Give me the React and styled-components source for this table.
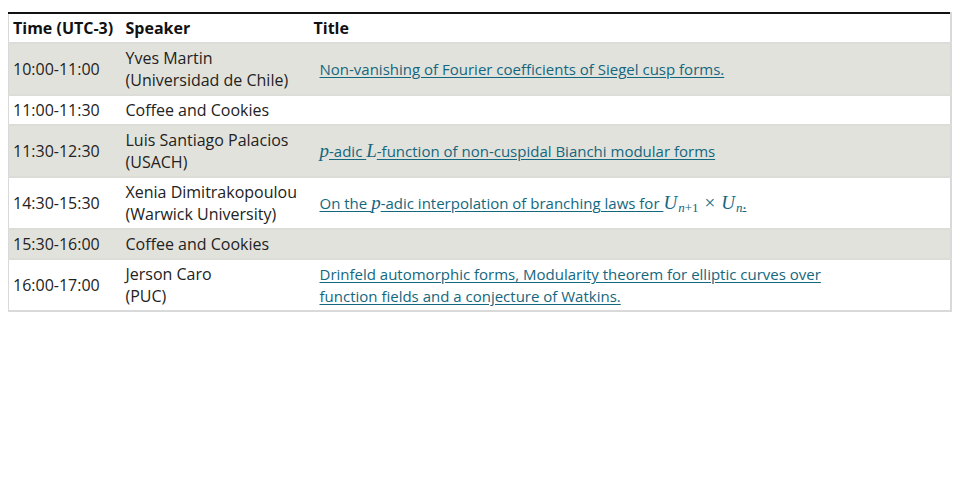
import React from 'react';
import styled, { createGlobalStyle } from 'styled-components';

const GlobalStyles = createGlobalStyle`
    body {
        margin: 8px;
        font-family: "Open Sans", "Liberation Sans", sans-serif;
        font-size: 16px;
        color: #222;
        background: #fff;
    }
`;

const Table = styled.table`
    width: 100%;
    margin-top: 4px;
    border-collapse: collapse;
    table-layout: fixed;
    border-top: 2px solid #111;
    border-left: 1px solid #d9d9d9;
    border-right: 2px solid #d9d9d9;
    border-bottom: 2px solid #d9d9d9;
`

const Th = styled.th`
    text-align: left;
    font-weight: 700;
    color: #111;
    line-height: 22px;
    padding: 3px 4px;
`

const Row = styled.tr`
    background-color: ${p => p.$shaded ? '#e2e2dc' : '#fff'};
    border-top: 2px solid #dcdcd8;
`

const Td = styled.td`
    vertical-align: middle;
    line-height: 22px;
    padding: 3px 4px;
`

const TitleLink = styled.a`
    display: block;
    max-width: 510px;
    margin-left: 6px;
    font-size: 15px;
    line-height: 22px;
    color: #13677e;
    text-decoration: underline;
    text-underline-offset: 2px;
`

const MathText = styled.span`
    display: inline-block;
    font-family: "Liberation Serif", "DejaVu Serif", serif;
    font-style: italic;
    font-size: 19px;
    line-height: 1;
    text-decoration: none;
`

const Sub = styled.sub`
    font-size: 13px;
    vertical-align: -3px;
    line-height: 1;
    padding-left: 1px;
`

const Upright = styled.span`
    font-style: normal;
    padding: ${p => p.$spaced ? '0 6px' : '0'};
`

const talks = [
    { time: '10:00-11:00', speaker: 'Yves Martin', place: 'Universidad de Chile', title: <>Non-vanishing of Fourier coefficients of Siegel cusp forms.</> },
    { time: '11:00-11:30', speaker: 'Coffee and Cookies' },
    { time: '11:30-12:30', speaker: 'Luis Santiago Palacios', place: 'USACH', title: <><MathText>p</MathText>-adic <MathText>L</MathText>-function of non-cuspidal Bianchi modular forms</> },
    { time: '14:30-15:30', speaker: 'Xenia Dimitrakopoulou', place: 'Warwick University', title: <>On the <MathText>p</MathText>-adic interpolation of branching laws for <MathText>U<Sub>n<Upright>+1</Upright></Sub><Upright $spaced>×</Upright>U<Sub>n</Sub></MathText>.</> },
    { time: '15:30-16:00', speaker: 'Coffee and Cookies' },
    { time: '16:00-17:00', speaker: 'Jerson Caro', place: 'PUC', title: <>Drinfeld automorphic forms, Modularity theorem for elliptic curves over function fields and a conjecture of Watkins.</> },
];

const App = () => {
    return (
        <>
            <GlobalStyles />
            <Table>
                <colgroup>
                    <col style={{ width: 113 }} />
                    <col style={{ width: 188 }} />
                    <col />
                </colgroup>
                <thead>
                    <tr>
                        <Th>Time (UTC-3)</Th>
                        <Th>Speaker</Th>
                        <Th>Title</Th>
                    </tr>
                </thead>
                <tbody>
                    {talks.map((t, i) => (
                        <Row key={t.time} $shaded={i % 2 === 0}>
                            <Td>{t.time}</Td>
                            <Td>
                                {t.speaker}
                                {t.place && <><br />({t.place})</>}
                            </Td>
                            <Td>
                                {t.title && <TitleLink href="#">{t.title}</TitleLink>}
                            </Td>
                        </Row>
                    ))}
                </tbody>
            </Table>
        </>
    )
};

export default App;
